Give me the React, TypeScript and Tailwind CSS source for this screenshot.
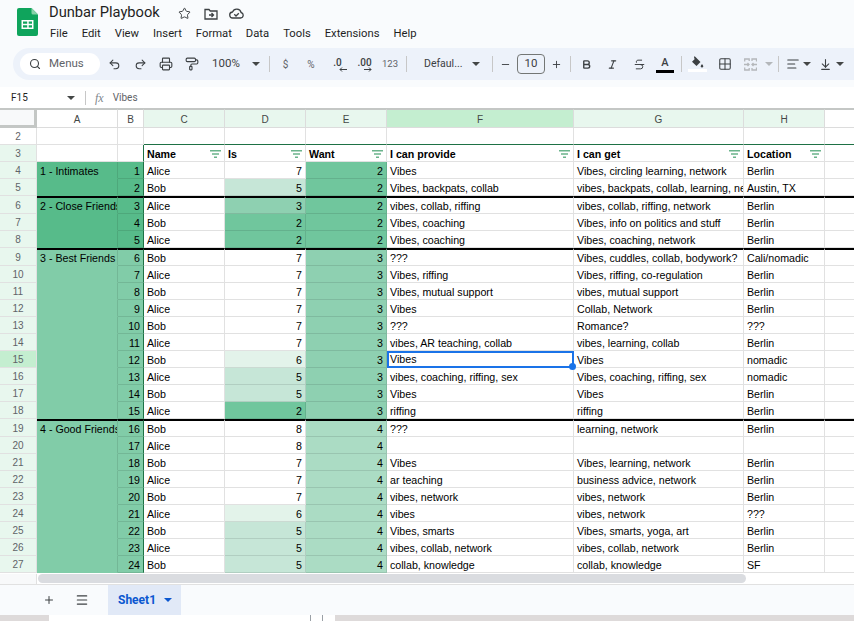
import { ReactNode } from "react";
import {
  AlignLeft,
  ArrowDownToLine,
  Bold,
  Grid2x2,
  Italic,
  Menu,
  Minus,
  PaintRoller,
  Plus,
  Printer,
  Redo2,
  Search,
  Star,
  Strikethrough,
  Undo2,
} from "lucide-react";

const colsClass = "grid grid-cols-[37px_81px_26px_81px_81px_81px_187px_170px_81px_30px]";
const line = "border-[#e1e1e1]";
const cellFont = "font-['Liberation_Sans',sans-serif] text-[10.670px] leading-[13px] text-black";

type Row = {
  n: number;
  a?: string;
  group: number;
  name: string;
  is: number;
  want: number;
  f: string;
  g: string;
  h: string;
  thick?: boolean;
};

const rows: Row[] = [
  { n: 4, a: "1 - Intimates", group: 1, name: "Alice", is: 7, want: 2, f: "Vibes", g: "Vibes, circling learning, network", h: "Berlin" },
  { n: 5, group: 1, name: "Bob", is: 5, want: 2, f: "Vibes, backpats, collab", g: "vibes, backpats, collab, learning, network", h: "Austin, TX" },
  { n: 6, a: "2 - Close Friends", group: 1, name: "Alice", is: 3, want: 2, f: "vibes, collab, riffing", g: "vibes, collab, riffing, network", h: "Berlin", thick: true },
  { n: 7, group: 1, name: "Bob", is: 2, want: 2, f: "Vibes, coaching", g: "Vibes, info on politics and stuff", h: "Berlin" },
  { n: 8, group: 1, name: "Alice", is: 2, want: 2, f: "Vibes, coaching", g: "Vibes, coaching, network", h: "Berlin" },
  { n: 9, a: "3 - Best Friends", group: 2, name: "Bob", is: 7, want: 3, f: "???", g: "Vibes, cuddles, collab, bodywork?", h: "Cali/nomadic", thick: true },
  { n: 10, group: 2, name: "Alice", is: 7, want: 3, f: "Vibes, riffing", g: "Vibes, riffing, co-regulation", h: "Berlin" },
  { n: 11, group: 2, name: "Bob", is: 7, want: 3, f: "Vibes, mutual support", g: "vibes, mutual support", h: "Berlin" },
  { n: 12, group: 2, name: "Alice", is: 7, want: 3, f: "Vibes", g: "Collab, Network", h: "Berlin" },
  { n: 13, group: 2, name: "Bob", is: 7, want: 3, f: "???", g: "Romance?", h: "???" },
  { n: 14, group: 2, name: "Alice", is: 7, want: 3, f: "vibes, AR teaching, collab", g: "vibes, learning, collab", h: "Berlin" },
  { n: 15, group: 2, name: "Bob", is: 6, want: 3, f: "Vibes", g: "Vibes", h: "nomadic" },
  { n: 16, group: 2, name: "Alice", is: 5, want: 3, f: "vibes, coaching, riffing, sex", g: "Vibes, coaching, riffing, sex", h: "nomadic" },
  { n: 17, group: 2, name: "Bob", is: 5, want: 3, f: "Vibes", g: "Vibes", h: "Berlin" },
  { n: 18, group: 2, name: "Alice", is: 2, want: 3, f: "riffing", g: "riffing", h: "Berlin" },
  { n: 19, a: "4 - Good Friends", group: 2, name: "Bob", is: 8, want: 4, f: "???", g: "learning, network", h: "Berlin", thick: true },
  { n: 20, group: 2, name: "Alice", is: 8, want: 4, f: "", g: "", h: "" },
  { n: 21, group: 2, name: "Bob", is: 7, want: 4, f: "Vibes", g: "Vibes, learning, network", h: "Berlin" },
  { n: 22, group: 2, name: "Alice", is: 7, want: 4, f: "ar teaching", g: "business advice, network", h: "Berlin" },
  { n: 23, group: 2, name: "Bob", is: 7, want: 4, f: "vibes, network", g: "vibes, network", h: "Berlin" },
  { n: 24, group: 2, name: "Alice", is: 6, want: 4, f: "vibes", g: "vibes, network", h: "???" },
  { n: 25, group: 2, name: "Bob", is: 5, want: 4, f: "Vibes, smarts", g: "Vibes, smarts, yoga, art", h: "Berlin" },
  { n: 26, group: 2, name: "Alice", is: 5, want: 4, f: "vibes, collab, network", g: "vibes, collab, network", h: "Berlin" },
  { n: 27, group: 2, name: "Bob", is: 5, want: 4, f: "collab, knowledge", g: "collab, knowledge", h: "SF" },
];

const scale: Record<number, string> = {
  2: "bg-[#70c69d] border-black/10",
  3: "bg-[#8ed0b1] border-black/10",
  4: "bg-[#abdcc4] border-black/10",
  5: "bg-[#c6e6d7] border-black/10",
  6: "bg-[#e3f3ea] border-black/10",
  7: line,
  8: line,
};

function Cell({ children, className = "", thick }: { children?: ReactNode; className?: string; thick?: boolean }) {
  return (
    <div
      className={`relative flex items-center overflow-hidden whitespace-nowrap border-r border-b px-[3px] ${cellFont} ${
        thick ? "border-t-2 border-t-black pt-[1px]" : "pt-[2px]"
      } ${className || line}`}
    >
      {children}
    </div>
  );
}

function Caret({ className = "text-[#444746]" }: { className?: string }) {
  return (
    <svg width="8" height="4" viewBox="0 0 8 4" className={className}>
      <path d="M0 0h8L4 4z" fill="currentColor" />
    </svg>
  );
}

function Tool({ w, children, className = "" }: { w: string; children?: ReactNode; className?: string }) {
  return <div className={`flex h-full shrink-0 items-center justify-center text-[#3c4043] ${w} ${className}`}>{children}</div>;
}

function Sep({ w }: { w: string }) {
  return (
    <div className={`flex h-full shrink-0 items-center justify-center ${w}`}>
      <div className="h-[16px] w-px bg-[#c7c7c7]" />
    </div>
  );
}

function FilterIcon() {
  return (
    <svg width="11" height="8" viewBox="0 0 11 8" className="absolute right-[3px] top-[5px]">
      <path d="M0 .75h11M2 4h7M4 7.25h3" stroke="#6bb48c" strokeWidth="1.5" />
    </svg>
  );
}

function RowHead({ n, active }: { n: number | string; active?: boolean }) {
  return (
    <div
      className={`flex items-center justify-center border-r border-b border-[#e1e1e1] pt-[1px] font-['Liberation_Sans',sans-serif] text-[10px] leading-[13px] text-[#5f6368] ${
        active ? "bg-[#c4eed0]" : "bg-[#e8f7ee]"
      }`}
    >
      {n}
    </div>
  );
}

function SheetsLogo() {
  return (
    <svg width="21" height="28" viewBox="0 0 21 28">
      <path d="M2 0h12.500L21 6.500V26a2 2 0 0 1-2 2H2a2 2 0 0 1-2-2V2a2 2 0 0 1 2-2z" fill="#0fa45c" />
      <path d="M14.500 0L21 6.500h-5a1.500 1.500 0 0 1-1.500-1.500z" fill="#86d2a8" />
      <path d="M4.500 12h12v9h-12z" fill="#fff" />
      <path d="M6 13.500h4.200v2.200H6zM11.700 13.500H15v2.200h-3.300zM6 17.200h4.200v2.300H6zM11.700 17.200H15v2.300h-3.300z" fill="#0fa45c" />
    </svg>
  );
}

function HeaderRow() {
  const heads = ["", "A", "B", "C", "D", "E", "F", "G", "H", ""];
  return (
    <div className={`${colsClass} h-[19px]`}>
      {heads.map((h, i) => {
        if (i === 0) return <div key={i} className="border-r-[3px] border-b-[3px] border-t border-[#c4c7c5] bg-[#f8f9fa]" />;
        const bg = h === "F" ? "bg-[#c4eed0]" : i >= 3 && i <= 8 ? "bg-[#e8f7ee]" : "bg-white";
        return (
          <div
            key={i}
            className={`flex items-center justify-center border-t border-r border-b border-t-[#c4c7c5] border-r-[#dcdcdc] border-b-[#dcdcdc] pt-[1px] font-['Liberation_Sans',sans-serif] text-[10px] leading-[13px] text-[#444746] ${bg}`}
          >
            {h}
          </div>
        );
      })}
    </div>
  );
}

export default function App() {
  return (
    <div className="flex h-[621px] w-[854px] flex-col overflow-hidden bg-[#f9fbfd] font-['Roboto',sans-serif]">
      {/* title + menus */}
      <div className="flex h-[48px] shrink-0">
        <div className="pl-[17px] pt-[8px]">
          <SheetsLogo />
        </div>
        <div className="pl-[11px]">
          <div className="flex h-[27px] items-center">
            <span className="-mt-[3px] w-[129px] text-[14.700px] text-[#1f1f1f]">Dunbar Playbook</span>
            <Star className="size-[13px] text-[#3c4043]" strokeWidth={1.800} />
            <svg width="14" height="12" viewBox="0 0 14 12" className="ml-[13px] text-[#3c4043]" fill="none" stroke="currentColor" strokeWidth="1.300">
              <path d="M1 1.500h4l1.300 1.500H13v8H1z" />
              <path d="M5 7h4M7.500 5l2 2-2 2" />
            </svg>
            <svg width="15" height="11" viewBox="0 0 15 11" className="ml-[11px] text-[#3c4043]" fill="none" stroke="currentColor" strokeWidth="1.300">
              <path d="M4 10h7.500a2.800 2.800 0 0 0 .6-5.500A4.500 4.500 0 0 0 3.500 4 3 3 0 0 0 4 10z" />
              <path d="M5.300 6.300l1.700 1.700 2.800-2.800" />
            </svg>
          </div>
          <div className="flex h-[14px] items-center gap-[14px] pl-px text-[11.250px] text-[#1f1f1f]">
            {["File", "Edit", "View", "Insert", "Format", "Data", "Tools", "Extensions", "Help"].map((m) => (
              <span key={m}>{m}</span>
            ))}
          </div>
        </div>
      </div>

      {/* toolbar */}
      <div className="ml-[13px] flex h-[32px] shrink-0 items-center rounded-l-full bg-[#edf2fa] pl-[7px] text-[#3c4043]">
        <div className="mr-px flex h-[22px] w-[80px] shrink-0 items-center rounded-full bg-white pl-[9px]">
          <Search className="size-[12px] text-[#3c4043]" strokeWidth={2.200} />
          <span className="ml-[8px] text-[11.500px] text-[#5f6368]">Menus</span>
        </div>
        <Tool w="w-[26px]"><Undo2 className="size-[13px]" strokeWidth={1.900} /></Tool>
        <Tool w="w-[26px]"><Redo2 className="size-[13px]" strokeWidth={1.900} /></Tool>
        <Tool w="w-[26px]"><Printer className="size-[14px]" strokeWidth={1.900} /></Tool>
        <Tool w="w-[26px]"><PaintRoller className="size-[14px]" strokeWidth={1.900} /></Tool>
        <Tool w="w-[42px]"><span className="text-[11.500px]">100%</span></Tool>
        <Tool w="w-[18px]"><Caret /></Tool>
        <Sep w="w-[8px]" />
        <Tool w="w-[25px]"><span className="text-[10px] text-[#5f6368]">$</span></Tool>
        <Tool w="w-[26px]"><span className="text-[10px] text-[#5f6368]">%</span></Tool>
        <Tool w="w-[27px]">
          <span className="relative -mt-[3px] text-[10px] font-medium leading-none">
            .0
            <svg width="8" height="5" viewBox="0 0 8 5" className="absolute left-[6px] top-[9px]" fill="none" stroke="currentColor">
              <path d="M8 2.500H1M3 .5l-2 2 2 2" />
            </svg>
          </span>
        </Tool>
        <Tool w="w-[27px]">
          <span className="relative -mt-[3px] text-[10px] font-medium leading-none">
            .00
            <svg width="8" height="5" viewBox="0 0 8 5" className="absolute left-[7px] top-[9px]" fill="none" stroke="currentColor">
              <path d="M0 2.500h7M5 .5l2 2-2 2" />
            </svg>
          </span>
        </Tool>
        <Tool w="w-[24px]"><span className="text-[9.500px] text-[#5f6368]">123</span></Tool>
        <Sep w="w-[8px]" />
        <Tool w="w-[56px]" className="justify-start pl-[14px]"><span className="text-[10.500px]">Defaul...</span></Tool>
        <Tool w="w-[20px]"><Caret /></Tool>
        <Sep w="w-[12px]" />
        <Tool w="w-[14px]"><Minus className="size-[11px]" strokeWidth={2} /></Tool>
        <div className="ml-[5px] flex h-[20px] w-[28px] shrink-0 items-center justify-center rounded-[4px] border border-[#747775] text-[11.500px]">10</div>
        <Tool w="w-[22px]"><Plus className="size-[11px]" strokeWidth={2} /></Tool>
        <Sep w="w-[6px]" />
        <Tool w="w-[26px]"><Bold className="size-[11px]" strokeWidth={3} /></Tool>
        <Tool w="w-[27px]"><Italic className="size-[11px]" strokeWidth={2.400} /></Tool>
        <Tool w="w-[26px]"><Strikethrough className="size-[13px]" strokeWidth={1.800} /></Tool>
        <Tool w="w-[26px]" className="flex-col">
          <span className="mt-[2px] text-[11px] font-medium leading-[12px]">A</span>
          <div className="mt-px h-[3px] w-[18px] bg-black" />
        </Tool>
        <Sep w="w-[6px]" />
        <Tool w="w-[27px]" className="flex-col">
          <svg width="13" height="12" viewBox="0 0 13 12" className="text-[#3c4043]">
            <path d="M3.500 0L5 1.500l4.500 4.500-4 4-4.500-4.200 2.800-2.800L3 2z" fill="currentColor" />
            <path d="M11 8c.8 1 1.200 1.500 1.200 2.200a1.200 1.200 0 0 1-2.400 0C9.800 9.500 10.200 9 11 8z" fill="currentColor" />
          </svg>
          <div className="mt-[1px] h-[3px] w-[19px] bg-white" />
        </Tool>
        <Tool w="w-[27px]"><Grid2x2 className="size-[14px]" strokeWidth={1.800} /></Tool>
        <Tool w="w-[25px]">
          <svg width="13" height="13" viewBox="0 0 13 13" fill="none" stroke="#b4b7ba" strokeWidth="1.300">
            <path d="M.7 3.500V1h4.500v2M8 3V1h4.500v2.500M.7 9.500V12h4.500v-2M8 10v2h4.500V9.500M0 6.500h4.500M3.500 5l1.500 1.500L3.500 8M13 6.500H8.500M9.500 5L8 6.500 9.500 8" />
          </svg>
        </Tool>
        <Tool w="w-[12px]"><Caret className="text-[#b4b7ba]" /></Tool>
        <Sep w="w-[6px]" />
        <Tool w="w-[20px]" className="justify-end pr-[1px]"><AlignLeft className="size-[14px]" strokeWidth={1.800} /></Tool>
        <Tool w="w-[12px]"><Caret /></Tool>
        <Tool w="w-[21px]" className="justify-end pr-[2px]"><ArrowDownToLine className="size-[13px]" strokeWidth={2} /></Tool>
        <Tool w="w-[12px]"><Caret /></Tool>
      </div>
      <div className="h-[7px] shrink-0" />

      {/* formula bar */}
      <div className="flex h-[22px] shrink-0 items-center border-b border-[#c4c7c5] bg-white text-[#444746]">
        <span className="ml-[11px] w-[56px] text-[10px] text-[#1f1f1f]">F15</span>
        <Caret />
        <div className="ml-[10px] h-[14px] w-px bg-[#c7c7c7]" />
        <span className="ml-[9px] font-['Liberation_Serif',serif] text-[12px] italic text-[#80868b]">fx</span>
        <span className="ml-[9px] text-[10px] text-[#5f6368]">Vibes</span>
      </div>

      {/* sheet grid */}
      <div className="h-[465px] shrink-0 overflow-hidden bg-white">
        <HeaderRow />
        {/* row 2 */}
        <div className={`${colsClass} h-[17px]`}>
          <div className="flex items-center justify-center border-r border-b border-[#e1e1e1] pt-[1px] font-['Liberation_Sans',sans-serif] text-[10px] leading-[13px] text-[#5f6368]">2</div>
          <Cell />
          <Cell />
          {[0, 1, 2, 3, 4, 5, 6].map((i) => (
            <Cell key={i} className="border-r-[#e1e1e1] border-b-[#1e7145]" />
          ))}
        </div>
        {/* row 3 */}
        <div className={`${colsClass} h-[17px]`}>
          <RowHead n={3} />
          <Cell />
          <Cell className="border-r-[#1e7145] border-b-[#e1e1e1]" />
          {["Name", "Is", "Want", "I can provide", "I can get", "Location"].map((t) => (
            <Cell key={t}>
              <span className="font-bold">{t}</span>
              <FilterIcon />
            </Cell>
          ))}
          <Cell />
        </div>
        {rows.map((r) => {
          const band = r.group === 1 ? "bg-[#57bb8a]" : "bg-[#81cca8]";
          return (
            <div key={r.n} className={`${colsClass} ${r.thick ? "h-[18px]" : "h-[17px]"}`}>
              <RowHead n={r.n} active={r.n === 15} />
              <Cell thick={r.thick} className={`${band} border-r-black/10 border-b-transparent`}>
                {r.a}
              </Cell>
              <Cell thick={r.thick} className={`${band} justify-end border-r-[#1e7145] border-b-black/10`}>
                {r.n - 3}
              </Cell>
              <Cell thick={r.thick}>{r.name}</Cell>
              <Cell thick={r.thick} className={`justify-end ${scale[r.is]}`}>{r.is}</Cell>
              <Cell thick={r.thick} className={`justify-end ${scale[r.want]}`}>{r.want}</Cell>
              {r.n === 15 ? (
                <div className={`relative z-10 flex items-center whitespace-nowrap border-2 border-[#1a73e8] pl-[1px] ${cellFont}`}>
                  {r.f}
                  <span className="absolute bottom-[-4px] right-[-4px] size-[7px] rounded-full bg-[#1a73e8]" />
                </div>
              ) : (
                <Cell thick={r.thick}>{r.f}</Cell>
              )}
              <Cell thick={r.thick}>{r.g}</Cell>
              <Cell thick={r.thick}>{r.h}</Cell>
              <Cell thick={r.thick} />
            </div>
          );
        })}
      </div>

      {/* horizontal scrollbar */}
      <div className="flex h-[11px] shrink-0 border-b border-[#e1e1e1] bg-white">
        <div className="w-[37px] border-r border-[#e1e1e1] bg-[#f8f9fa]" />
        <div className="ml-px h-[9px] w-[708px] rounded-full bg-[#dadce0]" />
      </div>

      {/* sheet tabs */}
      <div className="flex h-[30px] shrink-0 items-center bg-[#f9fbfd] text-[#3c4043]">
        <Plus className="ml-[43px] size-[12px]" strokeWidth={2} />
        <Menu className="ml-[20px] size-[14px]" strokeWidth={2} />
        <div className="ml-[19px] flex h-full w-[73px] items-center bg-[#e1e9f7] pl-[10px]">
          <span className="text-[12px] font-bold text-[#0b57d0]">Sheet1</span>
          <Caret className="ml-[8px] text-[#0b57d0]" />
        </div>
      </div>

      {/* sliver of the window behind */}
      <div className="flex flex-1 bg-[#dedada]">
        <div className="ml-[49px] flex w-[286px] justify-end bg-white pr-[12px]">
          <div className="h-full w-px bg-[#9aa0a6]" />
          <div className="ml-[11px] h-full w-px bg-[#9aa0a6]" />
        </div>
      </div>
    </div>
  );
}
